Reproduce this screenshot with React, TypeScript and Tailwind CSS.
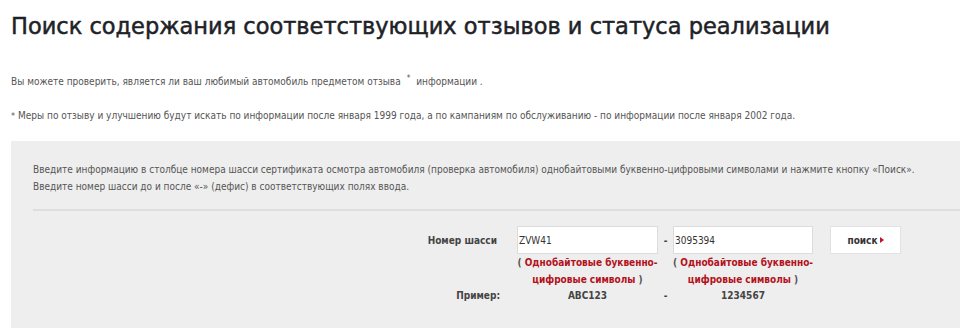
import React from 'react';

const FONT = { fontFamily: '"DejaVu Sans Condensed", "DejaVu Sans", Verdana, sans-serif' };

const Hint: React.FC = () => (
  <div className="text-center text-[10px] leading-[17px] font-bold text-[#555] whitespace-nowrap">
    ( <span className="text-[#b3121c]">Однобайтовые буквенно-</span>
    <br />
    <span className="text-[#b3121c]">цифровые символы</span> )
  </div>
);

const App: React.FC = () => {
  return (
    <div className="w-[960px] h-[328px] overflow-hidden bg-white" style={FONT}>
      <h1
        className="pl-[11px] pt-[11px] text-[22.5px] leading-[30px] text-[#1e2227] [-webkit-text-stroke:0.5px_#1e2227]"
        style={{ fontFamily: '"DejaVu Sans", Verdana, sans-serif' }}
      >
        Поиск содержания соответствующих отзывов и статуса реализации
      </h1>

      <p className="pl-[11px] mt-[33px] text-[10px] leading-[16px] text-[#555]">
        Вы можете проверить, является ли ваш любимый автомобиль предметом отзыва
        <sup className="relative top-[-4px] text-[8px] mx-[6px]">*</sup>
        информации .
      </p>

      <p className="pl-[11px] mt-[18px] text-[10px] leading-[16px] text-[#555]">
        <span className="text-[9px] mr-[3px]">*</span>Меры по отзыву и улучшению будут искать по информации после января 1999 года, а по кампаниям по обслуживанию - по информации после января 2002 года.
      </p>

      <div className="ml-[11px] mt-[17px] bg-[#eeeeee] pl-[22px] pt-[20px] pb-[40px]">
        <div className="text-[10px] leading-[17px] text-[#555]">
          <p>Введите информацию в столбце номера шасси сертификата осмотра автомобиля (проверка автомобиля) однобайтовыми буквенно-цифровыми символами и нажмите кнопку «Поиск».</p>
          <p>Введите номер шасси до и после «-» (дефис) в соответствующих полях ввода.</p>
        </div>
        <div className="mt-[14px] border-t-2 border-[#dedede]" />

        <div className="mt-[15px] grid grid-cols-[484px_141px_15px_140px_17px_71px] text-[10px] text-[#333]">
          <div className="pr-[20px] text-right self-center font-bold text-[#444]">Номер шасси</div>
          <div className="h-[28px] bg-white border border-[#dcdcdc] flex items-center pl-[1px] text-[#333]">ZVW41</div>
          <div className="self-center text-center font-bold text-[#444]">-</div>
          <div className="h-[28px] bg-white border border-[#dcdcdc] flex items-center pl-[1px] text-[#333]">3095394</div>
          <div />
          <div className="h-[28px] bg-white border border-[#e2e2e2] flex items-center justify-center gap-[2px] text-[10px] font-bold text-[#333]">
            поиск
            <span className="inline-block w-0 h-0 border-y-[3px] border-y-transparent border-l-[4px] border-l-[#c8102e]" />
          </div>

          <div />
          <div><Hint /></div>
          <div />
          <div><Hint /></div>
          <div />
          <div />

          <div className="pr-[17px] text-right font-bold text-[#444] leading-[16px]">Пример:</div>
          <div className="text-center font-bold text-[#444] leading-[16px]">ABC123</div>
          <div className="text-center font-bold text-[#444] leading-[16px]">-</div>
          <div className="text-center font-bold text-[#444] leading-[16px]">1234567</div>
          <div />
          <div />
        </div>
      </div>
    </div>
  );
};

export default App;
